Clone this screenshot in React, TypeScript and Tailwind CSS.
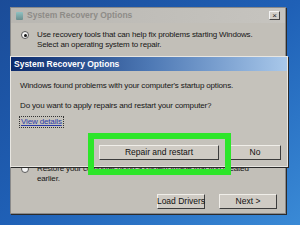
import React from 'react';

const font = { fontFamily: '"Liberation Sans", "DejaVu Sans", sans-serif' };

function Radio({ checked }: { checked?: boolean }) {
  return (
    <div className="w-[8px] h-[8px] rounded-full border border-[#5a5a5a] bg-[#f4f4f4] flex items-center justify-center shrink-0">
      {checked && <div className="w-[3px] h-[3px] rounded-full bg-[#111]" />}
    </div>
  );
}

function Btn({ label, className }: { label: string; className: string }) {
  return (
    <div
      className={`h-[15px] flex items-center justify-center whitespace-nowrap bg-[#cfcbc4] border border-t-[#f0eee9] border-l-[#f0eee9] border-r-[#3c3c3c] border-b-[#3c3c3c] text-[8.5px] text-[#111] ${className}`}
    >
      {label}
    </div>
  );
}

export default function App() {
  return (
    <div
      className="relative w-[300px] h-[225px] overflow-hidden bg-gradient-to-br from-[#1b4c98] via-[#1f60b6] to-[#3a8ad6]"
      style={font}
    >
      {/* back window */}
      <div className="absolute left-[10px] top-[7px] w-[276px] h-[207px] flex flex-col bg-[#c2bfb8] border border-[#8a8a8a] shadow-[1px_1px_0_#2b2b2b]">
        <div className="h-[15px] flex items-center gap-[4px] px-[5px] bg-gradient-to-r from-[#b9b7b2] to-[#c6c4bf]">
          <div className="w-[7px] h-[8px] bg-gradient-to-b from-[#8fc2c2] to-[#6b8e8e] rounded-[1px]" />
          <span className="text-[8.5px] font-bold text-[#8e8c88]">System Recovery Options</span>
          <div className="ml-auto w-[11px] h-[9px] flex items-center justify-center bg-[#d2cfc9] border border-t-[#f2f2f2] border-l-[#f2f2f2] border-r-[#444] border-b-[#444] text-[8px] leading-none text-[#222]">
            ×
          </div>
        </div>
        <div className="flex gap-[8px] pl-[10px] pt-[7px]">
          <div className="pt-[1px]">
            <Radio checked />
          </div>
          <div className="text-[8px] leading-[10px] tracking-[-0.15px] text-[#161616]">
            <div>Use recovery tools that can help fix problems starting Windows.</div>
            <div>Select an operating system to repair.</div>
          </div>
        </div>
        <div className="flex gap-[8px] pl-[10px] mt-[114px]">
          <div className="pt-[1px]">
            <Radio />
          </div>
          <div className="text-[8px] leading-[10px] tracking-[-0.15px] text-[#161616]">
            <div>Restore your computer using a system image that you created</div>
            <div>earlier.</div>
          </div>
        </div>
        <div className="flex justify-end gap-[14px] pr-[8px] mt-[10px]">
          <Btn label="Load Drivers" className="w-[48px]" />
          <Btn label="Next >" className="w-[58px]" />
        </div>
      </div>

      {/* front dialog */}
      <div className="absolute left-[10px] top-[56px] w-[278px] h-[111px] flex flex-col bg-[#c5c2bb] border border-[#e8e6e1] shadow-[1px_1px_0_#2a2a2a]">
        <div className="h-[14px] flex items-center px-[3px] bg-gradient-to-r from-[#0c2a6c] via-[#4d78b4] to-[#a9c8ea]">
          <span className="text-[8.5px] font-bold text-white">System Recovery Options</span>
        </div>
        <div className="flex flex-col px-[9px] text-[8px] leading-[10px] tracking-[-0.15px] text-[#161616]">
          <div className="mt-[10px]">Windows found problems with your computer's startup options.</div>
          <div className="mt-[10px]">Do you want to apply repairs and restart your computer?</div>
          <div className="mt-[6px] self-start px-[1px] outline outline-1 outline-dotted outline-[#333] underline text-[#2a3aa8]">
            View details
          </div>
        </div>
        <div className="flex justify-end gap-[10px] pr-[6px] mt-auto mb-[6px]">
          <Btn label="Repair and restart" className="w-[120px]" />
          <Btn label="No" className="w-[52px]" />
        </div>
      </div>

      {/* green highlight */}
      <div className="absolute left-[88px] top-[133px] w-[143px] h-[42px] border-[6px] border-[#2de62a]" />
    </div>
  );
}
